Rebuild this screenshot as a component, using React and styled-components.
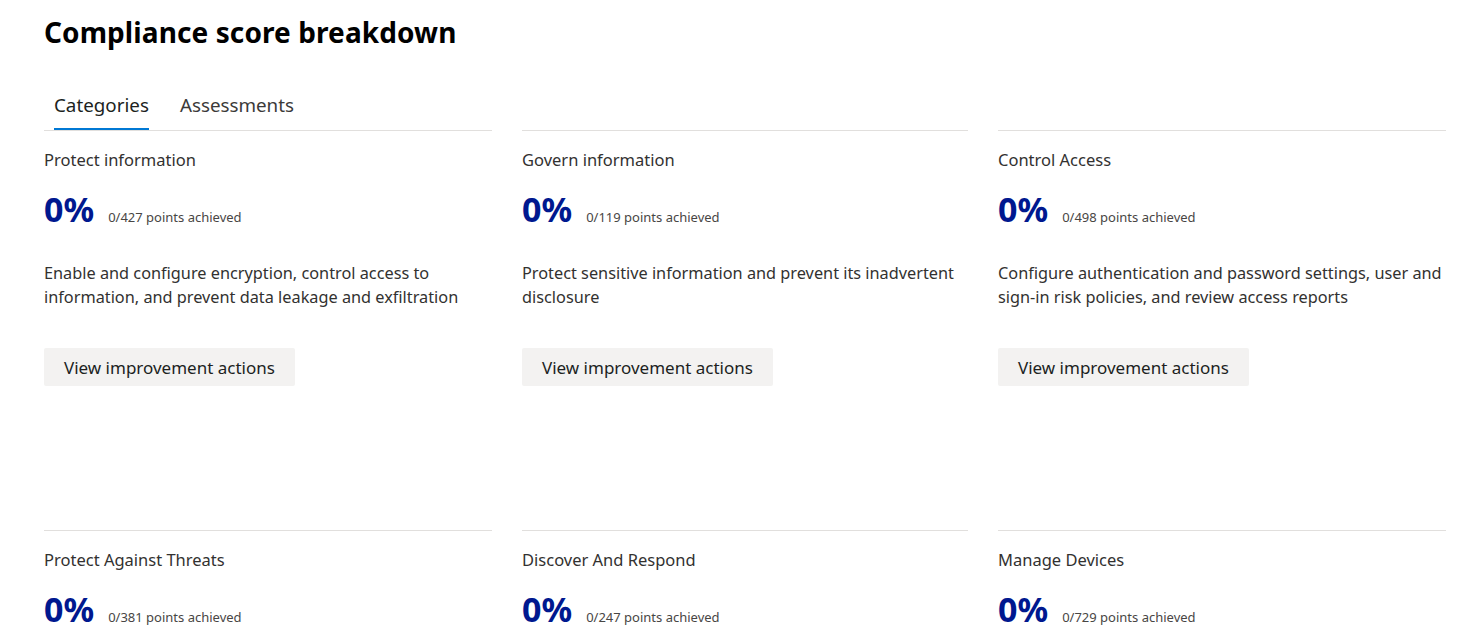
import React from "react";
import styled, { createGlobalStyle } from "styled-components";

const Global = createGlobalStyle`
  html, body { margin: 0; padding: 0; background: #ffffff; }
  body { font-family: "Segoe UI", "Noto Sans", "Open Sans", sans-serif; color: #323130; }
  * { box-sizing: border-box; }
`;

const Page = styled.div`
  padding: 12px 21px 0 44px;
  width: 1467px;
  height: 640px;
  overflow: hidden;
`;

const Title = styled.h1`
  margin: 0;
  font-size: 28px;
  font-weight: 700;
  color: #000;
  line-height: 40px;
  letter-spacing: 0.1px;
`;

const TabList = styled.div`
  display: flex;
  gap: 31px;
  margin-top: 40px;
  padding-left: 10px;
`;

const Tab = styled.div`
  font-size: 18.8px;
  line-height: 26px;
  padding-bottom: 10px;
  color: ${(p) => (p.$active ? "#201f1e" : "#3b3a39")};
  border-bottom: 2px solid ${(p) => (p.$active ? "#0078d4" : "transparent")};
`;

const Grid = styled.div`
  display: grid;
  grid-template-columns: 448px 446px 448px;
  column-gap: 30px;
`;

const Card = styled.div`
  border-top: 1px solid #e1dfdd;
  height: 400px;
  padding-top: 18px;
`;

const CardTitle = styled.div`
  font-size: 16.5px;
  line-height: 22px;
  color: #323130;
`;

const ScoreRow = styled.div`
  display: flex;
  align-items: baseline;
  gap: 14px;
  margin-top: 16px;
`;

const Score = styled.span`
  font-size: 34px;
  font-weight: 700;
  color: #00188f;
  line-height: 44px;
`;

const Points = styled.span`
  font-size: 13px;
  color: #484644;
`;

const Desc = styled.p`
  margin: 30px 0 0;
  font-size: 16.3px;
  line-height: 24px;
  color: #323130;
  height: 48px;
`;

const Button = styled.button`
  margin-top: 39px;
  height: 38px;
  padding: 0 20px;
  border: none;
  border-radius: 2px;
  background: #f3f2f1;
  font-family: inherit;
  font-size: 17px;
  color: #201f1e;
`;

const cards = [
  { title: "Protect information", pts: "0/427", desc: "Enable and configure encryption, control access to information, and prevent data leakage and exfiltration" },
  { title: "Govern information", pts: "0/119", desc: "Protect sensitive information and prevent its inadvertent disclosure" },
  { title: "Control Access", pts: "0/498", desc: "Configure authentication and password settings, user and sign-in risk policies, and review access reports" },
  { title: "Protect Against Threats", pts: "0/381", desc: "" },
  { title: "Discover And Respond", pts: "0/247", desc: "" },
  { title: "Manage Devices", pts: "0/729", desc: "" },
];

export default function App() {
  return (
    <Page>
      <Global />
      <Title>Compliance score breakdown</Title>
      <TabList>
        <Tab $active>Categories</Tab>
        <Tab>Assessments</Tab>
      </TabList>
      <Grid>
        {cards.map((c) => (
          <Card key={c.title}>
            <CardTitle>{c.title}</CardTitle>
            <ScoreRow>
              <Score>0%</Score>
              <Points>{c.pts} points achieved</Points>
            </ScoreRow>
            <Desc>{c.desc}</Desc>
            <Button>View improvement actions</Button>
          </Card>
        ))}
      </Grid>
    </Page>
  );
}
